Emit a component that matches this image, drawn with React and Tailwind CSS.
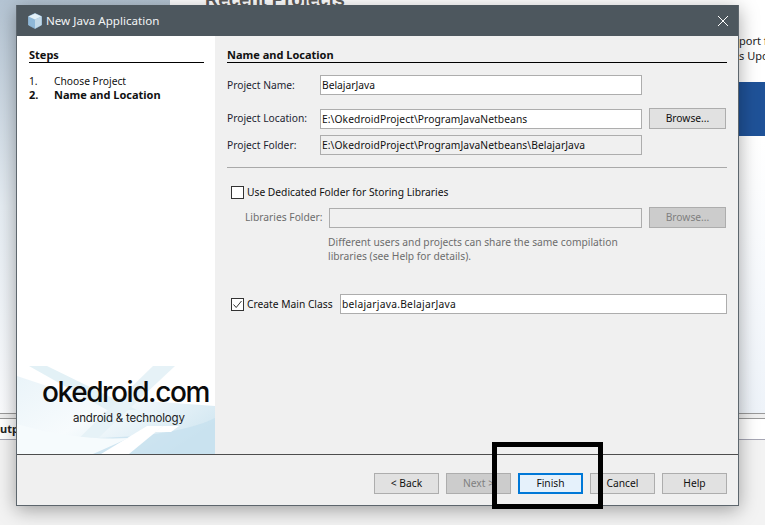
const labelCls = "w-[93px] shrink-0 text-[#1c2430]";
const inputCls = "h-5 border border-[#adadad] bg-white px-[1px] leading-[18px] text-[#111]";
const readonlyCls = "h-5 border border-[#adadad] bg-[#f0f0f0] px-[1px] leading-[18px] text-[#111]";
const btnCls = "flex h-[21px] w-[65px] items-center justify-center border border-[#adadad] bg-[#e1e1e1] text-[#111]";

function CubeIcon() {
  return (
    <svg width="16" height="16" viewBox="0 0 16 16">
      <path d="M8 0.5 L14.5 3.5 L14.5 12 L8 15.5 L1.5 12 L1.5 3.5 Z" fill="#8fb8d8" stroke="#8fb8d8" strokeWidth="0.8" strokeLinejoin="round" />
      <path d="M8 0.5 L14.5 3.5 L8 6.5 L1.5 3.5 Z" fill="#e4f0f7" />
      <path d="M14.5 3.5 L8 6.5 L8 15.5 L14.5 12 Z" fill="#c3d9e8" />
    </svg>
  );
}

function LogoArt() {
  return (
    <svg className="absolute inset-0" width="198" height="88" viewBox="0 0 198 88">
      <defs>
        <linearGradient id="fade" x1="0" y1="0" x2="1" y2="0.6">
          <stop offset="0" stopColor="#eaf4f9" />
          <stop offset="0.5" stopColor="#f7fbfd" />
          <stop offset="1" stopColor="#d4e8f2" />
        </linearGradient>
      </defs>
      <path d="M0 10 L60 30 L198 40 L198 88 L0 88 Z" fill="url(#fade)" />
      <path d="M12 0 L30 0 L120 44 L90 44 Z" fill="#e3f1f6" />
      <path d="M136 0 L158 0 L64 88 L46 88 Z" fill="#e6f2f7" />
      <path d="M198 52 C170 66 120 72 70 72 L44 88 L198 88 Z" fill="#c4e0ee" opacity="0.7" />
      <path d="M130 60 L146 60 L112 88 L84 88 Z" fill="#ffffff" />
      <path d="M146 60 L162 60 L154 66 L138 66 Z" fill="#ffffff" />
      <path d="M0 58 C40 70 80 74 112 72 L76 88 L0 88 Z" fill="#f6fbfd" />
    </svg>
  );
}

export default function App() {
  return (
    <div className="relative h-[525px] w-[765px] overflow-hidden bg-[#f3f3f3] font-['Noto_Sans',sans-serif] text-[10.25px]">
      {/* desktop behind the dialog */}
      <div className="absolute left-0 top-0 h-[413px] w-[170px] bg-gradient-to-b from-[#b4c4d3] via-[#e6edf3] to-[#fbfcfe]" />
      <div className="absolute left-[170px] top-0 h-[413px] w-[595px] bg-white" />
      <div className="absolute left-[205px] top-[-14px] font-['Liberation_Sans',sans-serif] text-[18.5px] font-bold text-[#5b5b5b]">Recent Projects</div>
      <div className="absolute left-[739px] top-[33px] whitespace-nowrap text-[11px] leading-[15px] text-[#222]">
        <div>port f</div>
        <div>s Upd</div>
      </div>
      <div className="absolute left-[739px] top-[82px] h-[54px] w-[26px] bg-[#1f5298]" />
      <div className="absolute left-[739px] top-[140px] h-[273px] w-[26px] bg-gradient-to-b from-white to-[#eef3f9]" />
      <div className="absolute left-0 top-[413px] h-[6px] w-[765px] border-y border-[#9a9a9a] bg-[#f0f0f0]" />
      <div className="absolute left-0 top-[419px] h-[21px] w-[765px] border-b border-[#a6a6b4] bg-white pl-0 text-[11px] font-bold leading-[20px] text-[#222]">utput</div>

      {/* dialog */}
      <div className="absolute left-4 top-[5px] flex h-[501px] w-[723px] flex-col border border-t-0 border-[#5d666d] bg-[#f0f0f0] shadow-[0_4px_18px_rgba(0,0,0,0.35)]">
        <div className="flex h-[31px] shrink-0 items-center bg-[#4d575e] pl-[10px] pr-[9px] text-white">
          <CubeIcon />
          <span className="ml-[3px] text-[11.6px] text-[#f2f4f5]">New Java Application</span>
          <svg className="ml-auto" width="12" height="12" viewBox="0 0 12 12">
            <path d="M1 1 L11 11 M11 1 L1 11" stroke="#ffffff" strokeWidth="1" fill="none" />
          </svg>
        </div>

        <div className="flex min-h-0 flex-1">
          <div className="relative flex w-[198px] shrink-0 flex-col bg-white pl-[12px] pr-[11px] pt-[12px] text-[#111]">
            <div className="border-b border-black text-[11px] font-bold leading-[14px]">Steps</div>
            <div className="mt-[11px] flex leading-[14px]">
              <span className="w-[25px]">1.</span>
              <span>Choose Project</span>
            </div>
            <div className="flex text-[11px] font-bold leading-[14px]">
              <span className="w-[25px]">2.</span>
              <span>Name and Location</span>
            </div>
            <div className="absolute bottom-0 left-0 h-[88px] w-[198px] overflow-hidden">
              <LogoArt />
              <div className="absolute left-[25px] top-[9px] font-['Inter',sans-serif] text-[28px] font-medium leading-[34px] tracking-[-1.4px] text-[#0b0b0b]">okedroid.com</div>
              <div className="absolute left-[56px] top-[45px] whitespace-nowrap font-['Inter',sans-serif] text-[11.5px] leading-[14px] tracking-[-0.2px] text-[#222]">android & technology</div>
            </div>
          </div>

          <div className="flex min-w-0 flex-1 flex-col pl-[12px] pr-[11px] pt-[12px] text-[#1c2430]">
            <div className="border-b border-black text-[11px] font-bold leading-[14px] text-[#111]">Name and Location</div>

            <div className="mt-[12px] flex items-center">
              <span className={`${labelCls} pt-px`}>Project Name:</span>
              <div className={`w-[322px] ${inputCls}`}>BelajarJava</div>
            </div>
            <div className="mt-[13px] flex items-center">
              <span className={labelCls}>Project Location:</span>
              <div className={`w-[322px] tracking-[0.08px] ${inputCls}`}>E:\OkedroidProject\ProgramJavaNetbeans</div>
              <div className={`ml-[7px] !w-[77px] ${btnCls}`}>Browse...</div>
            </div>
            <div className="mt-[6px] flex items-center">
              <span className={`${labelCls} pt-px`}>Project Folder:</span>
              <div className={`w-[322px] tracking-[0.08px] ${readonlyCls}`}>E:\OkedroidProject\ProgramJavaNetbeans\BelajarJava</div>
            </div>

            <div className="mt-[12px] h-px bg-[#a9a9a9]" />

            <div className="mt-[17px] flex items-center pl-[4px]">
              <div className="h-[13px] w-[13px] border border-[#333] bg-white" />
              <span className="ml-[3px] text-[#111]">Use Dedicated Folder for Storing Libraries</span>
            </div>
            <div className="mt-[7px] flex items-center pl-[18px]">
              <span className="w-[84px] shrink-0 text-[#6d6d6d]">Libraries Folder:</span>
              <div className={`w-[313px] ${readonlyCls}`} />
              <div className={`ml-[7px] !w-[77px] ${btnCls} !bg-[#cccccc] text-[#808080]`}>Browse...</div>
            </div>
            <div className="mt-[7px] pl-[101px] leading-[14px] text-[#6d6d6d]">
              <div>Different users and projects can share the same compilation</div>
              <div>libraries (see Help for details).</div>
            </div>

            <div className="mt-[31px] flex items-center pl-[4px]">
              <div className="flex h-[13px] w-[13px] items-center justify-center border border-[#333] bg-white">
                <svg width="11" height="11" viewBox="0 0 11 11">
                  <path d="M1.5 5.5 L4.2 8.5 L9.5 2" stroke="#333" strokeWidth="1" fill="none" />
                </svg>
              </div>
              <span className="ml-[3px] w-[93px] shrink-0 text-[#111]">Create Main Class</span>
              <div className={`flex-1 tracking-[0.25px] ${inputCls}`}>belajarjava.BelajarJava</div>
            </div>
          </div>
        </div>

        <div className="flex h-[51px] shrink-0 items-start justify-end gap-[7px] border-t border-[#4d4d4d] pr-[11px] pt-[18px]">
          <div className={btnCls}>&lt; Back</div>
          <div className={`${btnCls} !bg-[#cccccc] text-[#808080]`}>Next &gt;</div>
          <div className={`${btnCls} !border-2 !border-[#0078d7] !bg-[#e5f1fb]`}>Finish</div>
          <div className={btnCls}>Cancel</div>
          <div className={btnCls}>Help</div>
        </div>
      </div>

      {/* highlight box drawn over the screenshot */}
      <div className="absolute left-[492px] top-[442px] h-[67px] w-[111px] border-[5px] border-black" />
    </div>
  );
}
